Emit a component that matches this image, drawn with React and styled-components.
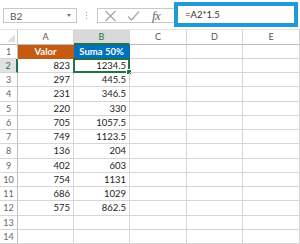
import styled, { createGlobalStyle, css } from 'styled-components';

const GlobalStyle = createGlobalStyle`
  html, body {
    margin: 0;
    padding: 0;
    background: #ffffff;
  }
  body {
    font-family: Lato, "Open Sans", "Liberation Sans", sans-serif;
    width: 300px;
    height: 244px;
    overflow: hidden;
  }
`;

const GREEN = '#217346';
const GRID = '#d6d6d6';

const Page = styled.div`
  display: flex;
  flex-direction: column;
  width: 300px;
  height: 244px;
  overflow: hidden;
`;

// formula bar

const Toolbar = styled.div`
  height: 31px;
  display: flex;
  align-items: flex-start;
  padding-left: 3px;
  box-sizing: border-box;
  border-bottom: 1px solid #e3e3e3;
`;

const NameBox = styled.div`
  margin-top: 8px;
  width: 74px;
  height: 15px;
  box-sizing: border-box;
  border: 1px solid #c8c8c8;
  display: flex;
  align-items: center;
  justify-content: space-between;
  padding: 0 5px 0 6px;
  font-size: 10px;
  color: #555;
`;

const Caret = styled.span`
  width: 0;
  height: 0;
  border-left: 2.5px solid transparent;
  border-right: 2.5px solid transparent;
  border-top: 3px solid #777;
`;

const Grip = styled.div`
  margin: 12px 0 0 9px;
  width: 1px;
  height: 9px;
  background: repeating-linear-gradient(#9a9a9a 0 1px, transparent 1px 3px);
`;

const ActionBox = styled.div`
  margin: 8px 0 0 10px;
  width: 77px;
  height: 15px;
  box-sizing: border-box;
  border: 1px solid #c8c8c8;
  border-right: none;
  display: flex;
  align-items: center;
  padding-left: 6px;
  gap: 10px;
`;

const Fx = styled.span`
  font-family: "Liberation Serif", serif;
  font-style: italic;
  font-size: 13px;
  line-height: 1;
  color: #666;
  margin-left: 2px;
  letter-spacing: -0.5px;
`;

const FormulaInput = styled.div`
  margin-top: 2px;
  flex: 1;
  height: 25px;
  box-sizing: border-box;
  border: 4px solid #1e9ad6;
  margin-right: 2px;
  display: flex;
  align-items: center;
  padding-left: 7px;
  font-size: 9.5px;
  color: #333;
`;

// sheet

const Sheet = styled.div`
  display: grid;
  grid-template-columns: 18px 56px 56px 57px 56px 1fr;
  grid-template-rows: 15px 14px;
  grid-auto-rows: 14.25px;
`;

const Corner = styled.div`
  position: relative;
  border-right: 1px solid #c6c6c6;
  border-bottom: 1px solid #bdbdbd;
  &::after {
    content: '';
    position: absolute;
    right: 2px;
    bottom: 2px;
    width: 0;
    height: 0;
    border-left: 8px solid transparent;
    border-bottom: 8px solid #dfdfdf;
  }
`;

const ColHead = styled.div`
  display: flex;
  align-items: center;
  justify-content: center;
  font-size: 9px;
  color: #555;
  border-right: 1px solid #d4d4d4;
  border-bottom: 1px solid #bdbdbd;
  ${(p) =>
    p.$active &&
    css`
      background: #d9d9d9;
      color: ${GREEN};
      border-bottom: 2px solid ${GREEN};
    `}
`;

const RowHead = styled.div`
  display: flex;
  align-items: center;
  justify-content: center;
  font-size: 9px;
  color: #666;
  border-right: 1px solid #bdbdbd;
  border-bottom: 1px solid ${GRID};
  ${(p) =>
    p.$active &&
    css`
      background: #e1e1e1;
      color: ${GREEN};
      border-right: 2px solid ${GREEN};
    `}
`;

const Cell = styled.div`
  position: relative;
  display: flex;
  align-items: center;
  justify-content: ${(p) => (p.$head ? 'center' : 'flex-end')};
  padding: 0 3px;
  font-size: 9.5px;
  color: #222;
  border-right: 1px solid ${GRID};
  border-bottom: 1px solid ${GRID};
  ${(p) =>
    p.$fill &&
    css`
      background: ${p.$fill};
      color: #ffffff;
      font-weight: 700;
      border-color: ${p.$fill};
    `}
  ${(p) =>
    p.$selected &&
    css`
      &::before {
        content: '';
        position: absolute;
        left: -1px;
        top: -1px;
        right: -1px;
        bottom: -1px;
        border: 2px solid ${GREEN};
      }
      &::after {
        content: '';
        position: absolute;
        right: -3px;
        bottom: -3px;
        width: 4px;
        height: 4px;
        background: ${GREEN};
        border: 1px solid #fff;
      }
    `}
`;

const rows = [
  [823, 1234.5],
  [297, 445.5],
  [231, 346.5],
  [220, 330],
  [705, 1057.5],
  [749, 1123.5],
  [136, 204],
  [402, 603],
  [754, 1131],
  [686, 1029],
  [575, 862.5],
  [null, null],
  [null, null],
];

const cols = ['A', 'B', 'C', 'D', 'E'];

export default function App() {
  return (
    <>
      <GlobalStyle />
      <Page>
        <Toolbar>
          <NameBox>
            B2
            <Caret />
          </NameBox>
          <Grip />
          <ActionBox>
            <svg width="13" height="12" viewBox="0 0 13 12">
              <path d="M1.5 1 L11.5 11 M11.5 1 L1.5 11" stroke="#a6a6a6" strokeWidth="1.2" fill="none" />
            </svg>
            <svg width="13" height="12" viewBox="0 0 13 12">
              <path d="M1 6.5 L4.5 10 L12 1.5" stroke="#a6a6a6" strokeWidth="1.2" fill="none" />
            </svg>
            <Fx>fx</Fx>
          </ActionBox>
          <FormulaInput>=A2*1.5</FormulaInput>
        </Toolbar>

        <Sheet>
          <Corner />
          {cols.map((c) => (
            <ColHead key={c} $active={c === 'B'}>
              {c}
            </ColHead>
          ))}

          <RowHead>1</RowHead>
          <Cell $head $fill="#c55a11">Valor</Cell>
          <Cell $head $fill="#0070c0">Suma 50%</Cell>
          <Cell />
          <Cell />
          <Cell />

          {rows.map(([a, b], i) => (
            <Row key={i} n={i + 2} a={a} b={b} />
          ))}
        </Sheet>
      </Page>
    </>
  );
}

function Row({ n, a, b }) {
  return (
    <>
      <RowHead $active={n === 2}>{n}</RowHead>
      <Cell>{a}</Cell>
      <Cell $selected={n === 2}>{b}</Cell>
      <Cell />
      <Cell />
      <Cell />
    </>
  );
}
